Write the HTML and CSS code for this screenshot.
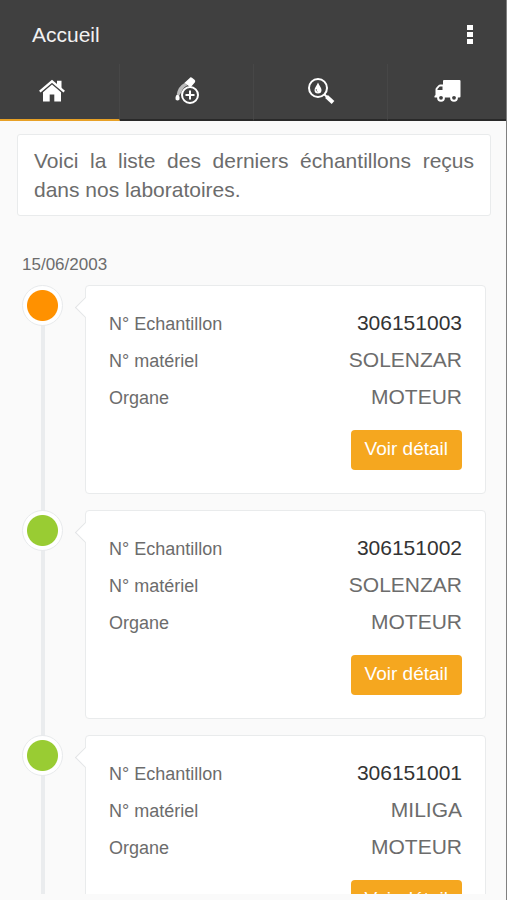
FILE: index.html
```html
<!DOCTYPE html>
<html lang="fr">
<head>
<meta charset="utf-8">
<meta name="viewport" content="width=device-width, initial-scale=1">
<title>Accueil</title>
<link rel="stylesheet" href="styles.css">
</head>
<body>
<header class="app-header">
  <div class="title-bar">
    <h1 class="title">Accueil</h1>
    <button class="menu-button" type="button" aria-label="Menu">
      <svg width="6" height="20" viewBox="0 0 6 20" fill="currentColor"><rect width="6" height="5"/><rect y="7" width="6" height="5"/><rect y="14" width="6" height="5"/></svg>
    </button>
  </div>
  <nav class="tabs">
    <a class="tab tab-active" href="#accueil" aria-label="Accueil">
      <svg width="28" height="24" viewBox="0 0 28 24" fill="currentColor"><path d="M14 5.500 23 13.200V22.500H16.300V15.500H11.700V22.500H5V13.200Z"/><path d="M1.800 12.600 14 2.300 26.200 12.600" fill="none" stroke="currentColor" stroke-width="2.300"/><path d="M19 1.800H23.500V9.700L19 5.800Z"/></svg>
    </a>
    <a class="tab" href="#ajout" aria-label="Ajouter un échantillon">
      <svg width="28" height="30" viewBox="0 0 28 30" fill="currentColor"><path d="M16.500 2.200Q17.500 .800 19 1.700L21.500 3.700Q23 5 21.800 6.500L17.700 11.200 11.300 7Z"/><path d="M11.500 7 14.500 9.300Q10 11.500 8.300 16.200L6 20 3.700 18.500Q5 10.500 11.500 7Z" opacity=".65"/><path d="M3.500 19H5.500Q7.500 21.500 6.500 23.500 4.500 25.500 2.600 23.500 1.700 21.500 3.500 19Z"/><circle cx="17" cy="19" r="8" fill="#404040" stroke="currentColor" stroke-width="2"/><path d="M17 14.500V23.500M12.500 19H21.500" stroke="currentColor" stroke-width="2"/></svg>
    </a>
    <a class="tab" href="#recherche" aria-label="Rechercher">
      <svg width="28" height="28" viewBox="0 0 28 28" fill="none" stroke="currentColor"><circle cx="11" cy="11" r="9" stroke-width="2"/><path d="M17.500 17.500 20 20" stroke-width="2"/><path d="M19.500 19.500 26 25.500" stroke-width="4"/><path d="M11 5.500C10 8.500 7.500 10.500 7.500 13A3.500 3.500 0 0 0 14.500 13C14.500 10.500 12 8.500 11 5.500Z" fill="currentColor" stroke="none"/><path d="M9.200 12Q9 14 10.500 14.700" stroke="#777"/></svg>
    </a>
    <a class="tab" href="#livraison" aria-label="Livraison">
      <svg width="27" height="24" viewBox="0 0 27 24"><path d="M9 2Q9 1 10 1H25.500Q26.500 1 26.500 2V17.500Q26.500 18.500 25.500 18.500H1Q0 18.500 .500 17L1.500 16V10.500Q1.500 9.500 2.200 8.800L4.500 6.200Q5.200 5.500 6.200 5.500H9Z" fill="currentColor"/><path d="M3.500 11V10L5.800 7.500H8.500V11Z" fill="#404040"/><g fill="currentColor"><circle cx="7" cy="18.800" r="3.900"/><circle cx="20" cy="18.800" r="3.900"/></g><g fill="#404040"><circle cx="7" cy="18.800" r="1.900"/><circle cx="20" cy="18.800" r="1.900"/></g></svg>
    </a>
  </nav>
</header>
<main class="content">
  <p class="intro">Voici la liste des derniers échantillons reçus dans nos laboratoires.</p>
  <h2 class="date">15/06/2003</h2>
  <ol class="timeline">
    <li class="entry">
      <span class="marker marker-orange"></span>
      <article class="card">
        <dl class="fields">
          <div class="field"><dt>N° Echantillon</dt><dd class="number">306151003</dd></div>
          <div class="field"><dt>N° matériel</dt><dd>SOLENZAR</dd></div>
          <div class="field"><dt>Organe</dt><dd>MOTEUR</dd></div>
        </dl>
        <button class="detail" type="button">Voir détail</button>
      </article>
    </li>
    <li class="entry">
      <span class="marker"></span>
      <article class="card">
        <dl class="fields">
          <div class="field"><dt>N° Echantillon</dt><dd class="number">306151002</dd></div>
          <div class="field"><dt>N° matériel</dt><dd>SOLENZAR</dd></div>
          <div class="field"><dt>Organe</dt><dd>MOTEUR</dd></div>
        </dl>
        <button class="detail" type="button">Voir détail</button>
      </article>
    </li>
    <li class="entry">
      <span class="marker"></span>
      <article class="card">
        <dl class="fields">
          <div class="field"><dt>N° Echantillon</dt><dd class="number">306151001</dd></div>
          <div class="field"><dt>N° matériel</dt><dd>MILIGA</dd></div>
          <div class="field"><dt>Organe</dt><dd>MOTEUR</dd></div>
        </dl>
        <button class="detail" type="button">Voir détail</button>
      </article>
    </li>
  </ol>
</main>
</body>
</html>
```
FILE: styles.css
```css
* { box-sizing: border-box; }

body {
  display: flex;
  flex-direction: column;
  height: 100vh;
  margin: 0;
  padding-bottom: 6px;
  border-right: 1px solid #808080;
  background: #fafafa;
  color: #6c6c6c;
  font-family: "Liberation Sans", Arial, sans-serif;
  font-size: 21px;
}

h1, h2, p, ol, dl, dd { margin: 0; padding: 0; font-weight: normal; }

.app-header {
  flex: none;
  margin-right: -1px;
  background: #404040;
  color: #fff;
  border-right: 1px solid #303030;
}

.title-bar {
  display: flex;
  justify-content: space-between;
  align-items: center;
  height: 64px;
  padding: 6px 27px 0 32px;
}

.title { font-size: 21px; color: #f2f2f2; }

.menu-button {
  display: flex;
  padding: 0 6px;
  border: 0;
  background: none;
  color: inherit;
}

.tabs {
  display: grid;
  grid-template-columns: 120fr 135fr 134fr 118fr;
  height: 57px;
}

.tab {
  display: flex;
  justify-content: center;
  align-items: center;
  padding-bottom: 2px;
  border-right: 1px solid #474747;
  border-bottom: 2px solid #292929;
  color: inherit;
}

.tab:last-child { border-right: 0; }

.tab-active { padding-right: 14px; border-bottom-color: #e8a126; }

.content { flex: 1; min-height: 0; overflow: hidden; }

.intro {
  margin: 13px 15px 0 17px;
  padding: 11px 16px;
  border: 1px solid #e9ebec;
  border-radius: 3px;
  background: #fff;
  line-height: 29px;
  text-align: justify;
}

.date {
  margin: 39px 22px 10px;
  font-size: 17px;
  line-height: 20px;
}

.timeline { list-style: none; }

.entry {
  position: relative;
  display: grid;
  grid-template-columns: 41px 1fr;
  gap: 22px;
  align-items: start;
  padding: 0 20px 16px 22px;
}

.entry::before {
  content: "";
  position: absolute;
  top: 0;
  bottom: 0;
  left: 41px;
  width: 4px;
  background: #eaecee;
}

.entry:first-child::before { top: 20px; }

.marker {
  position: relative;
  height: 41px;
  border: 1px solid #e8eaec;
  border-radius: 50%;
  background: radial-gradient(circle, #9c3 15px, #fff 16px);
}

.marker-orange { background: radial-gradient(circle, #ff9100 15px, #fff 16px); }

.card {
  position: relative;
  display: flex;
  flex-direction: column;
  gap: 13px;
  padding: 20px 23px 23px;
  border: 1px solid #e9ebec;
  border-radius: 4px;
  background: #fff;
}

.card::before {
  content: "";
  position: absolute;
  top: 14px;
  left: -8px;
  width: 14px;
  height: 14px;
  border: solid #e2e4e6;
  border-width: 0 0 1px 1px;
  background: #fff;
  transform: rotate(45deg);
}

.field {
  display: flex;
  justify-content: space-between;
  line-height: 37px;
}

.field dt { font-size: 18px; }

.field dd { line-height: 34px; }

.number { color: #333; }

.detail {
  align-self: flex-end;
  height: 40px;
  padding: 0 14px 2px;
  border: 0;
  border-radius: 4px;
  background: #f5a71f;
  color: #fff;
  font: 19px "Liberation Sans", Arial, sans-serif;
}
```
